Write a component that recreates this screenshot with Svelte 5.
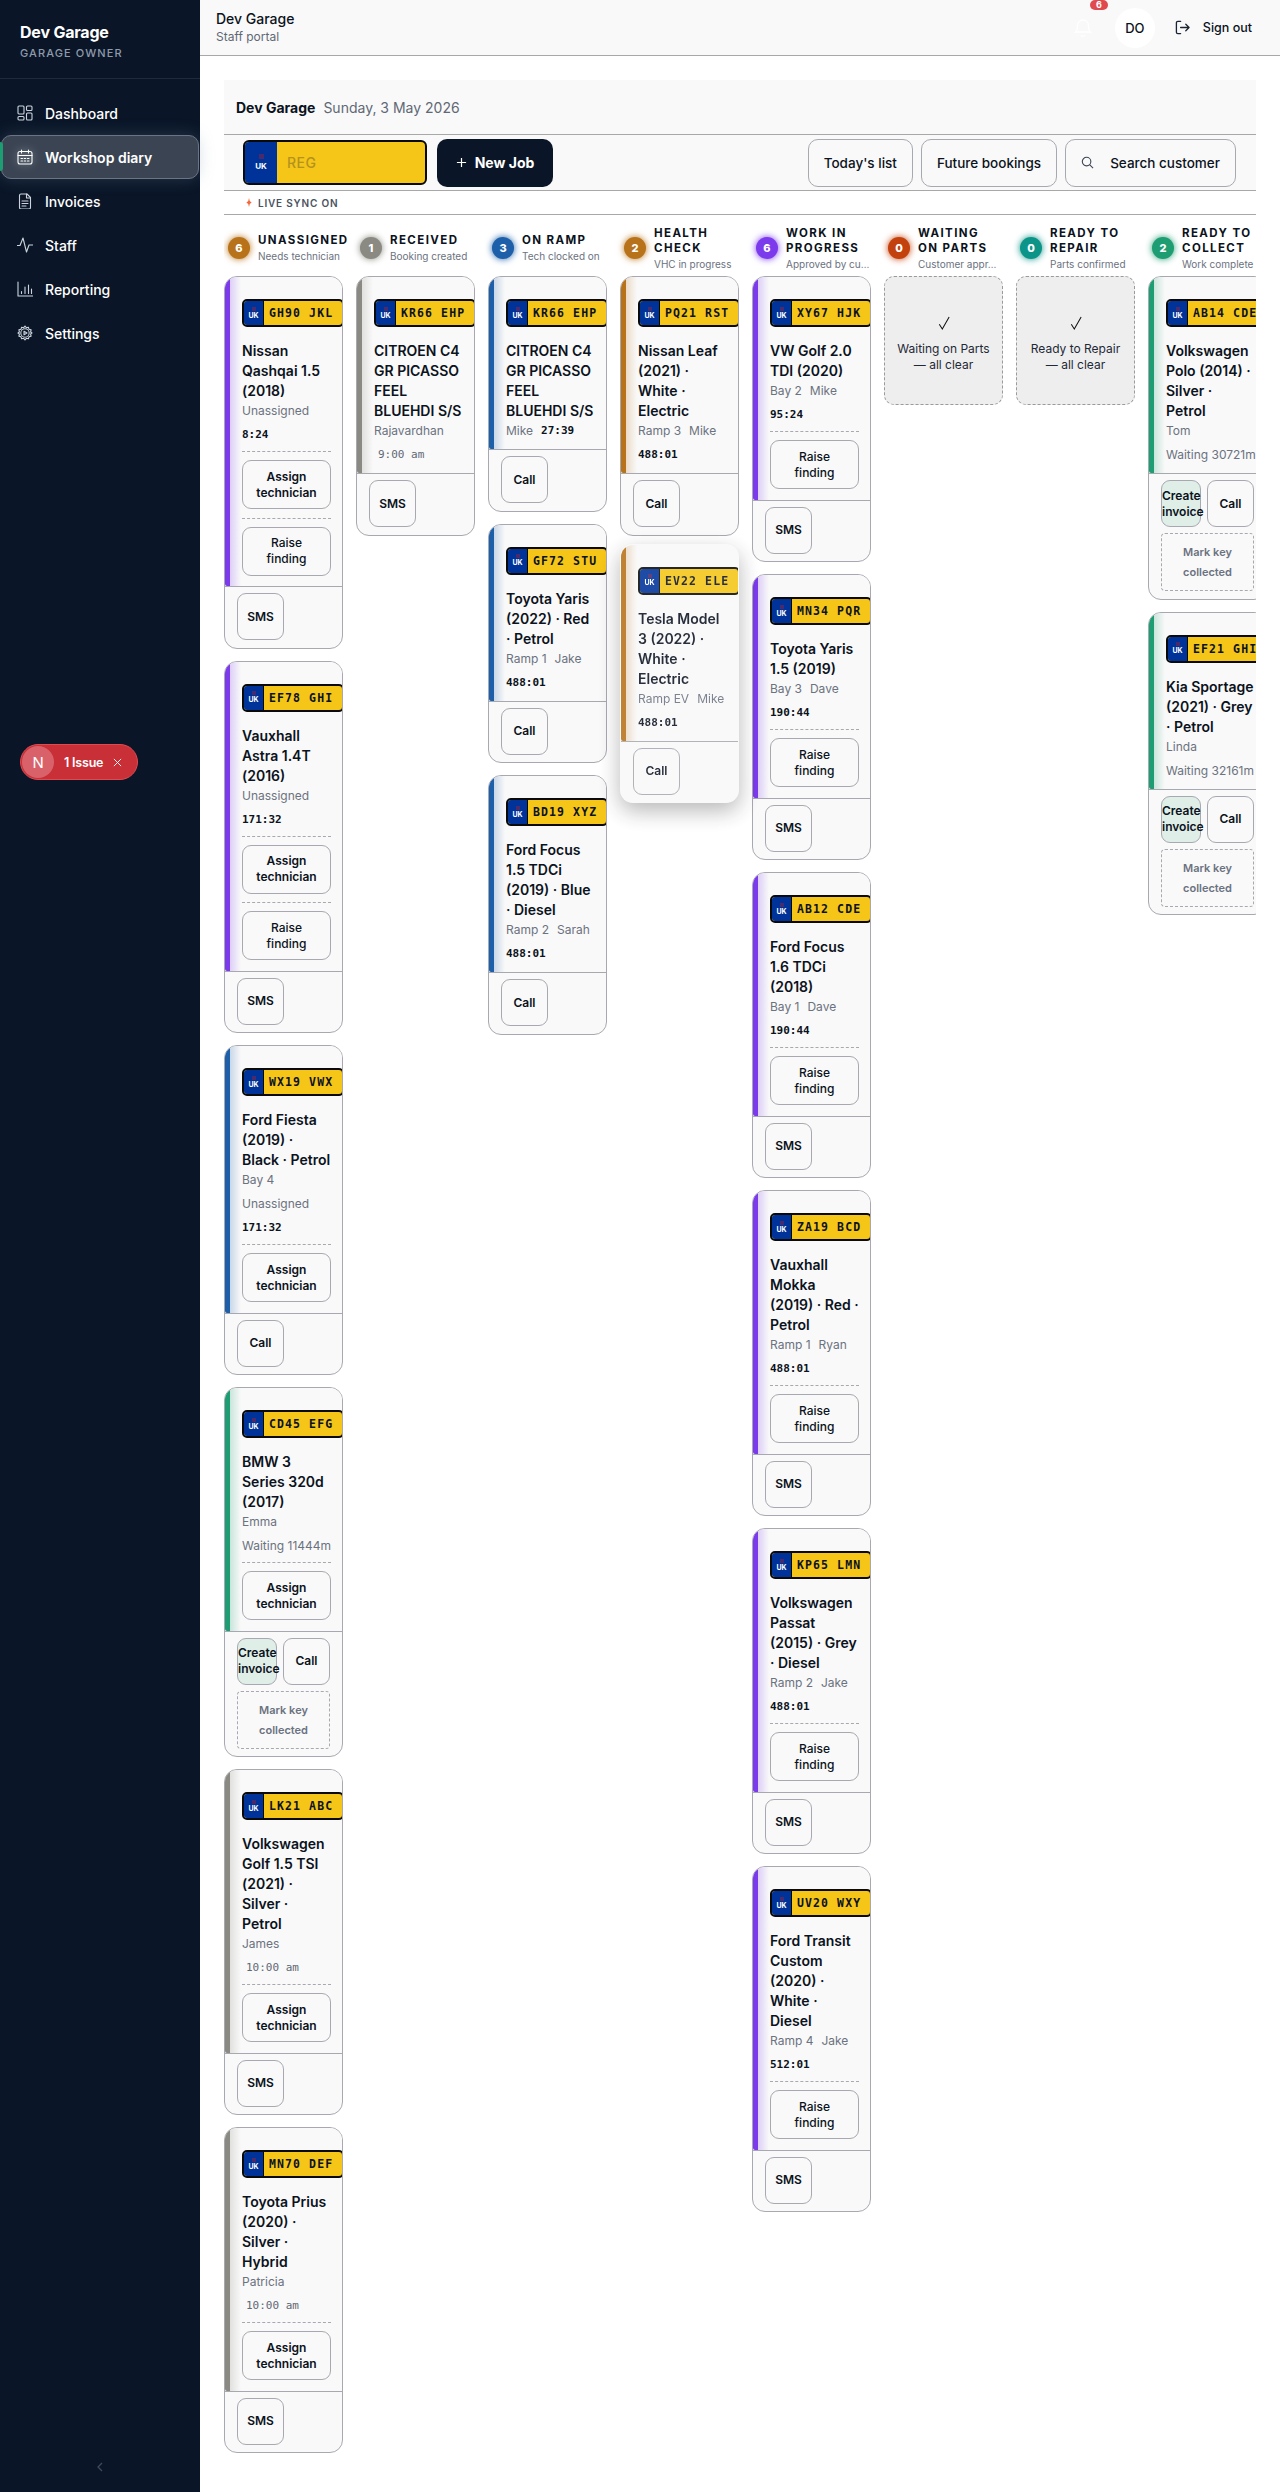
<script lang="ts">
  const PURPLE = '#7c3aed';
  const GREY = '#8a8a82';
  const BLUE = '#1d5fa8';
  const AMBER = '#b8731a';
  const GREEN = '#1f9d72';

  const nav = [
    { label: 'Dashboard', icon: 'dash' },
    { label: 'Workshop diary', icon: 'cal', active: true },
    { label: 'Invoices', icon: 'file' },
    { label: 'Staff', icon: 'pulse' },
    { label: 'Reporting', icon: 'bars' },
    { label: 'Settings', icon: 'gear' }
  ];

  const assign = 'Assign technician';
  const raise = 'Raise finding';

  const job = (reg, name, who, time, kind, actions, foot, color, lifted = false) => ({
    reg, name, who, time, kind, actions, foot, color, lifted
  });

  const collect = ['Create invoice', 'Call'];

  const columns = [
    {
      title: 'UNASSIGNED', sub: 'Needs technician', color: '#b8731a', count: 6,
      jobs: [
        job('GH90 JKL', 'Nissan Qashqai 1.5 (2018)', ['Unassigned'], '8:24', 'clock', [assign, raise], ['SMS'], PURPLE),
        job('EF78 GHI', 'Vauxhall Astra 1.4T (2016)', ['Unassigned'], '171:32', 'clock', [assign, raise], ['SMS'], PURPLE),
        job('WX19 VWX', 'Ford Fiesta (2019) · Black · Petrol', ['Bay 4', 'Unassigned'], '171:32', 'clock', [assign], ['Call'], BLUE),
        job('CD45 EFG', 'BMW 3 Series 320d (2017)', ['Emma'], 'Waiting 11444m', 'wait', [assign], collect, GREEN),
        job('LK21 ABC', 'Volkswagen Golf 1.5 TSI (2021) · Silver · Petrol', ['James'], '10:00 am', 'booked', [assign], ['SMS'], GREY),
        job('MN70 DEF', 'Toyota Prius (2020) · Silver · Hybrid', ['Patricia'], '10:00 am', 'booked', [assign], ['SMS'], GREY)
      ]
    },
    {
      title: 'RECEIVED', sub: 'Booking created', color: GREY, count: 1,
      jobs: [job('KR66 EHP', 'CITROEN C4 GR PICASSO FEEL BLUEHDI S/S', ['Rajavardhan'], '9:00 am', 'booked', [], ['SMS'], GREY)]
    },
    {
      title: 'ON RAMP', sub: 'Tech clocked on', color: BLUE, count: 3,
      jobs: [
        job('KR66 EHP', 'CITROEN C4 GR PICASSO FEEL BLUEHDI S/S', ['Mike'], '27:39', 'inline', [], ['Call'], BLUE),
        job('GF72 STU', 'Toyota Yaris (2022) · Red · Petrol', ['Ramp 1', 'Jake'], '488:01', 'clock', [], ['Call'], BLUE),
        job('BD19 XYZ', 'Ford Focus 1.5 TDCi (2019) · Blue · Diesel', ['Ramp 2', 'Sarah'], '488:01', 'clock', [], ['Call'], BLUE)
      ]
    },
    {
      title: 'HEALTH CHECK', sub: 'VHC in progress', color: AMBER, count: 2,
      jobs: [
        job('PQ21 RST', 'Nissan Leaf (2021) · White · Electric', ['Ramp 3', 'Mike'], '488:01', 'clock', [], ['Call'], AMBER),
        job('EV22 ELE', 'Tesla Model 3 (2022) · White · Electric', ['Ramp EV', 'Mike'], '488:01', 'clock', [], ['Call'], AMBER, true)
      ]
    },
    {
      title: 'WORK IN PROGRESS', sub: 'Approved by cu…', color: PURPLE, count: 6,
      jobs: [
        job('XY67 HJK', 'VW Golf 2.0 TDI (2020)', ['Bay 2', 'Mike'], '95:24', 'clock', [raise], ['SMS'], PURPLE),
        job('MN34 PQR', 'Toyota Yaris 1.5 (2019)', ['Bay 3', 'Dave'], '190:44', 'clock', [raise], ['SMS'], PURPLE),
        job('AB12 CDE', 'Ford Focus 1.6 TDCi (2018)', ['Bay 1', 'Dave'], '190:44', 'clock', [raise], ['SMS'], PURPLE),
        job('ZA19 BCD', 'Vauxhall Mokka (2019) · Red · Petrol', ['Ramp 1', 'Ryan'], '488:01', 'clock', [raise], ['SMS'], PURPLE),
        job('KP65 LMN', 'Volkswagen Passat (2015) · Grey · Diesel', ['Ramp 2', 'Jake'], '488:01', 'clock', [raise], ['SMS'], PURPLE),
        job('UV20 WXY', 'Ford Transit Custom (2020) · White · Diesel', ['Ramp 4', 'Jake'], '512:01', 'clock', [raise], ['SMS'], PURPLE)
      ]
    },
    { title: 'WAITING ON PARTS', sub: 'Customer appr…', color: '#c2410c', count: 0, empty: 'Waiting on Parts', jobs: [] },
    { title: 'READY TO REPAIR', sub: 'Parts confirmed', color: '#0d9488', count: 0, empty: 'Ready to Repair', jobs: [] },
    {
      title: 'READY TO COLLECT', sub: 'Work complete', color: GREEN, count: 2,
      jobs: [
        job('AB14 CDE', 'Volkswagen Polo (2014) · Silver · Petrol', ['Tom'], 'Waiting 30721m', 'wait', [], collect, GREEN),
        job('EF21 GHI', 'Kia Sportage (2021) · Grey · Petrol', ['Linda'], 'Waiting 32161m', 'wait', [], collect, GREEN)
      ]
    }
  ];
</script>

{#snippet plate(reg)}
  <div class="plate">
    <span class="plate-uk">
      <i class="flag"></i>
      UK
    </span>
    <span class="plate-reg">{reg}</span>
  </div>
{/snippet}

<div class="shell">
  <aside class="sidebar">
    <div class="brand">
      <strong>Dev Garage</strong>
      <span>GARAGE OWNER</span>
    </div>
    <nav>
      {#each nav as item}
        <div class="nav-item" class:active={item.active}>
          <svg viewBox="0 0 16 16" class="nav-icon">
            {#if item.icon === 'dash'}
              <rect x="1" y="1" width="6" height="8" rx="1" />
              <rect x="9.5" y="1" width="5.5" height="4.5" rx="1" />
              <rect x="9.5" y="8" width="5.5" height="7" rx="1" />
              <rect x="1" y="11.5" width="6" height="3.5" rx="1" />
            {:else if item.icon === 'cal'}
              <rect x="1" y="2.5" width="14" height="12.5" rx="2" />
              <path d="M1 6.5h14M4.5 1v3M11.5 1v3M4 9.5h1.5M7.2 9.5h1.5M10.5 9.5H12M4 12h1.5M7.2 12h1.5M10.5 12H12" />
            {:else if item.icon === 'file'}
              <path d="M2.5 2.500a1.500 1.500 0 0 1 1.500-1.500h6l3.500 3.500v10a1.500 1.500 0 0 1-1.500 1.500H4a1.500 1.500 0 0 1-1.500-1.500z" />
              <path d="M9.500 1v4h4M5 8h6M5 10.500h6M5 13h4" />
            {:else if item.icon === 'pulse'}
              <path d="M0 8.500h3L6 1l3.500 14 2.500-7h4" />
            {:else if item.icon === 'bars'}
              <path d="M1 1v14h15M4.500 10.500v2M8 6v6.500M11.500 4v8.500M14.500 8v4.500" />
            {:else}
              <path d="M8 1l1.300 1.700 2.100-.5.6 2.100 2.100.6-.5 2.100L15 8l-1.400 1 .5 2.100-2.100.6-.6 2.100-2.100-.5L8 15l-1.300-1.700-2.100.5-.6-2.100-2.100-.6.5-2.100L1 8l1.400-1-.5-2.100 2.100-.6.6-2.100 2.100.5z" />
              <circle cx="8" cy="8" r="4.200" />
              <path d="M7 6.200 10 8l-3 1.800z" />
            {/if}
          </svg>
          <span>{item.label}</span>
        </div>
      {/each}
    </nav>
    <div class="collapse">
      <svg viewBox="0 0 6 10"><path d="M5 1 1 5l4 4" /></svg>
    </div>
  </aside>

  <div class="issue">
    <span class="issue-n">N</span>
    <span class="issue-text">1 Issue</span>
    <svg viewBox="0 0 10 10"><path d="M1 1l8 8M9 1l-8 8" /></svg>
  </div>

  <main class="main">
    <header class="topbar">
      <div class="topbar-title">
        <strong>Dev Garage</strong>
        <span>Staff portal</span>
      </div>
      <div class="topbar-right">
        <div class="bell">
          <svg viewBox="0 0 18 20">
            <path d="M9 2a5.500 5.500 0 0 0-5.500 5.500c0 5-2 6.500-2 6.500h15s-2-1.500-2-6.500A5.500 5.500 0 0 0 9 2zM7 17a2.200 2.200 0 0 0 4 0" />
          </svg>
          <span class="bell-badge">6</span>
        </div>
        <div class="avatar">DO</div>
        <div class="signout">
          <svg viewBox="0 0 16 16">
            <path d="M6 1.500H3a1.500 1.500 0 0 0-1.500 1.500v10A1.500 1.500 0 0 0 3 14.500h3M6 8h9M11.500 4.500 15 8l-3.500 3.500" />
          </svg>
          <span>Sign out</span>
        </div>
      </div>
    </header>

    <section class="content">
      <div class="title-row">
        <strong>Dev Garage</strong>
        <span>Sunday, 3 May 2026</span>
      </div>

      <div class="toolbar">
        <div class="reg-input">
          <span class="reg-uk">
            <i class="flag"></i>
            UK
          </span>
          <span class="reg-placeholder">REG</span>
        </div>
        <button class="new-job">
          <svg viewBox="0 0 12 12"><path d="M6 1v10M1 6h10" /></svg>
          New Job
        </button>
        <div class="toolbar-right">
          <button class="tool">Today's list</button>
          <button class="tool">Future bookings</button>
          <button class="tool search">
            <svg viewBox="0 0 14 14"><circle cx="6" cy="6" r="4.600" /><path d="M9.500 9.500 13 13" /></svg>
            Search customer
          </button>
        </div>
      </div>

      <div class="live">
        <svg viewBox="0 0 8 12"><path d="M4 0 5 4l2.500 2L5 8l-1 4-1-4-2.500-2L3 4z" /></svg>
        LIVE SYNC ON
      </div>

      <div class="board">
        {#each columns as col}
          <div class="column">
            <div class="col-head">
              <span class="count" style="background:{col.color};box-shadow:0 0 7px {col.color}">{col.count}</span>
              <div class="col-text">
                <div class="col-title">{col.title}</div>
                <div class="col-sub">{col.sub}</div>
              </div>
            </div>

            {#if col.empty}
              <div class="empty">
                <svg viewBox="0 0 14 16"><path d="M1.500 9.500 5 15 13 1" /></svg>
                <span>{col.empty}</span>
                <span>— all clear</span>
              </div>
            {/if}

            {#each col.jobs as item}
              <article class="card" class:lifted={item.lifted}>
                <div class="card-body" style="--stripe:{item.color}">
                  {@render plate(item.reg)}
                  <div class="card-name">{item.name}</div>
                  <div class="card-who">
                    {#each item.who as who}<span>{who}</span>{/each}
                    {#if item.kind === 'inline'}<span class="clock">{item.time}</span>{/if}
                  </div>
                  {#if item.kind === 'clock'}
                    <div class="time clock">{item.time}</div>
                  {:else if item.kind === 'booked'}
                    <div class="time booked">{item.time}</div>
                  {:else if item.kind === 'wait'}
                    <div class="time wait">{item.time}</div>
                  {/if}
                  {#each item.actions as action}
                    <div class="action">
                      <button class="btn" class:strong={action === assign}>{action}</button>
                    </div>
                  {/each}
                </div>
                <div class="card-foot">
                  {#each item.foot as label}
                    <button class="btn strong foot-btn" class:invoice={label === 'Create invoice'}>{label}</button>
                  {/each}
                  {#if item.foot.length > 1}
                    <button class="key">Mark key collected</button>
                  {/if}
                </div>
              </article>
            {/each}
          </div>
        {/each}
      </div>
    </section>
  </main>
</div>

<style>
  :global(body) {
    margin: 0;
    background: #fff;
    font-family: Inter, 'Noto Sans', sans-serif;
    color: #0b1220;
  }

  button {
    font-family: inherit;
    color: inherit;
    cursor: pointer;
  }

  .shell {
    position: relative;
    display: flex;
    width: 1280px;
    height: 2492px;
    overflow: hidden;
  }

  .sidebar {
    display: flex;
    flex-direction: column;
    flex: 0 0 200px;
    background: #0a1628;
    color: #fff;
  }

  .brand {
    display: flex;
    flex-direction: column;
    gap: 5px;
    height: 79px;
    box-sizing: border-box;
    padding: 23px 20px 0;
    border-bottom: 1px solid #1f2b3d;
  }

  .brand strong {
    font-size: 16px;
    font-weight: 700;
    line-height: 18px;
    letter-spacing: -0.2px;
  }

  .brand span {
    font-size: 11px;
    font-weight: 500;
    letter-spacing: 1.1px;
    line-height: 14px;
    color: #8f9bab;
  }

  nav {
    display: flex;
    flex-direction: column;
    padding: 12px 1px 0;
    flex: 1;
  }

  .nav-item {
    position: relative;
    display: flex;
    align-items: center;
    gap: 12px;
    height: 44px;
    box-sizing: border-box;
    padding-left: 15px;
    font-size: 14px;
    font-weight: 500;
    border: 1px solid transparent;
    border-radius: 10px;
  }

  .nav-item.active {
    background: #3a4453;
    border-color: #6b7484;
    font-weight: 600;
    box-shadow: 0 0 16px rgba(120, 135, 160, 0.28);
  }

  .nav-item.active::before {
    content: '';
    position: absolute;
    left: -2px;
    top: 6px;
    bottom: 7px;
    width: 3px;
    border-radius: 0 3px 3px 0;
    background: #1f9d72;
  }

  .nav-icon {
    width: 16px;
    height: 16px;
    fill: none;
    stroke: #cdd3dc;
    stroke-width: 1.100;
    stroke-linecap: round;
    stroke-linejoin: round;
  }

  .active .nav-icon {
    stroke: #fff;
    filter: drop-shadow(0 0 4px rgba(255, 255, 255, 0.5));
  }

  .collapse {
    height: 36px;
    text-align: center;
  }

  .collapse svg {
    width: 6px;
    height: 10px;
    fill: none;
    stroke: #3f4b5c;
    stroke-width: 1.300;
  }

  .issue {
    position: absolute;
    left: 20px;
    top: 744px;
    display: flex;
    align-items: center;
    gap: 10px;
    width: 118px;
    height: 36px;
    box-sizing: border-box;
    padding: 0 12px 0 1px;
    background: #c92f36;
    border: 1px solid #df4a50;
    border-radius: 18px;
    color: #fff;
    font-size: 12.500px;
    font-weight: 600;
    letter-spacing: -0.2px;
    white-space: nowrap;
  }

  .issue-n {
    display: grid;
    place-items: center;
    flex: 0 0 32px;
    height: 32px;
    border-radius: 50%;
    background: #d9626a;
    font-size: 15px;
    font-weight: 400;
  }

  .issue svg {
    width: 9px;
    height: 9px;
    flex: 0 0 9px;
    fill: none;
    stroke: #fff;
    stroke-width: 1;
  }

  .main {
    flex: 1;
    min-width: 0;
  }

  .topbar {
    display: flex;
    justify-content: space-between;
    align-items: center;
    height: 56px;
    box-sizing: border-box;
    padding: 0 28px 0 16px;
    background: #f9f9f9;
    border-bottom: 1px solid #a8a8a8;
  }

  .topbar-title {
    display: flex;
    flex-direction: column;
  }

  .topbar-title strong {
    font-size: 14px;
    font-weight: 500;
    line-height: 18px;
  }

  .topbar-title span {
    font-size: 12px;
    line-height: 18px;
    color: #5f6875;
  }

  .topbar-right {
    display: flex;
    align-items: center;
  }

  .bell {
    position: relative;
    width: 18px;
    height: 20px;
    margin-right: 23px;
  }

  .bell svg {
    width: 18px;
    height: 20px;
    fill: none;
    stroke: #fff;
    stroke-width: 1.300;
  }

  .bell-badge {
    position: absolute;
    left: 16px;
    top: -18px;
    width: 18px;
    height: 10px;
    border-radius: 5px;
    background: #e04a4f;
    color: #fff;
    font-size: 9px;
    font-weight: 700;
    line-height: 10px;
    text-align: center;
  }

  .avatar {
    display: grid;
    place-items: center;
    width: 40px;
    height: 40px;
    border-radius: 50%;
    background: #fff;
    font-size: 13px;
    font-weight: 500;
  }

  .signout {
    display: flex;
    align-items: center;
    gap: 13px;
    margin-left: 20px;
    font-size: 12.500px;
    font-weight: 500;
  }

  .signout svg {
    width: 15px;
    height: 15px;
    fill: none;
    stroke: #1a2433;
    stroke-width: 1.400;
    stroke-linecap: round;
    stroke-linejoin: round;
  }

  .content {
    margin: 24px 24px 0;
  }

  .title-row {
    display: flex;
    align-items: center;
    gap: 8px;
    height: 55px;
    box-sizing: border-box;
    padding-left: 12px;
    background: #f9f9f9;
    border-bottom: 1px solid #a8a8a8;
    font-size: 14px;
  }

  .title-row strong {
    font-weight: 700;
  }

  .title-row span {
    color: #5f6875;
  }

  .toolbar {
    display: flex;
    align-items: center;
    height: 56px;
    box-sizing: border-box;
    padding: 0 20px 0 19px;
    background: #f9f9f9;
    border-bottom: 1px solid #a8a8a8;
  }

  .reg-input {
    display: flex;
    width: 184px;
    height: 45px;
    box-sizing: border-box;
    border: 2px solid #0a0a0a;
    border-radius: 6px;
    background: #f5c518;
    overflow: hidden;
  }

  .reg-uk {
    display: flex;
    flex-direction: column;
    align-items: center;
    justify-content: center;
    gap: 2px;
    flex: 0 0 32px;
    background: #003399;
    color: #fff;
    font-size: 8px;
    font-weight: 700;
  }

  .flag {
    display: block;
    width: 5px;
    height: 5px;
    background: #4a2a6a;
  }

  .reg-placeholder {
    align-self: center;
    margin-left: 10px;
    font-size: 14px;
    font-weight: 500;
    letter-spacing: 0.5px;
    color: #b39220;
  }

  .new-job {
    display: flex;
    align-items: center;
    justify-content: center;
    gap: 8px;
    width: 116px;
    height: 48px;
    margin-left: 10px;
    border: none;
    border-radius: 10px;
    background: #0a1628;
    color: #fff;
    font-size: 14px;
    font-weight: 700;
  }

  .new-job svg {
    width: 11px;
    height: 11px;
    fill: none;
    stroke: #fff;
    stroke-width: 1.300;
  }

  .toolbar-right {
    display: flex;
    gap: 8px;
    margin-left: auto;
  }

  .tool {
    height: 48px;
    padding: 0 15px;
    border: 1px solid #a8a8b0;
    border-radius: 10px;
    background: #f9f9f9;
    font-size: 13.500px;
    font-weight: 500;
  }

  .tool.search {
    display: flex;
    align-items: center;
    gap: 16px;
  }

  .search svg {
    width: 13px;
    height: 13px;
    fill: none;
    stroke: #3a4453;
    stroke-width: 1.200;
  }

  .live {
    display: flex;
    align-items: center;
    gap: 6px;
    height: 24px;
    box-sizing: border-box;
    padding-left: 22px;
    border-bottom: 1px solid #a8a8a8;
    font-size: 10px;
    font-weight: 600;
    letter-spacing: 0.8px;
    color: #4a5361;
  }

  .live svg {
    width: 6px;
    height: 9px;
    fill: #f2683c;
  }

  .board {
    display: flex;
    gap: 13px;
    overflow: hidden;
  }

  .column {
    display: flex;
    flex-direction: column;
    gap: 12px;
    flex: 0 0 119px;
    width: 119px;
  }

  .col-head {
    display: flex;
    align-items: center;
    gap: 8px;
    height: 49px;
    box-sizing: border-box;
    padding: 17px 0 0 4px;
  }

  .count {
    display: grid;
    place-items: center;
    flex: 0 0 22px;
    height: 22px;
    border-radius: 50%;
    color: #fff;
    font-size: 11px;
    font-weight: 800;
  }

  .col-text {
    min-width: 0;
    flex: 1;
  }

  .col-title {
    width: 78px;
    font-size: 11.500px;
    font-weight: 700;
    line-height: 15px;
    letter-spacing: 1.400px;
  }

  .col-sub {
    margin-top: 1px;
    font-size: 10px;
    line-height: 14px;
    color: #6b7280;
    white-space: nowrap;
  }

  .empty {
    display: flex;
    flex-direction: column;
    align-items: center;
    box-sizing: border-box;
    height: 129px;
    padding: 39px 6px 0;
    background: #eeeeee;
    border: 1px dashed #9a9a9a;
    border-radius: 10px;
    font-size: 12px;
    line-height: 16px;
    text-align: center;
    color: #1f2937;
  }

  .empty svg {
    width: 12px;
    height: 14px;
    margin-bottom: 11px;
    fill: none;
    stroke: #111;
    stroke-width: 1.200;
  }

  .card {
    border: 1px solid #a8a8b0;
    border-radius: 13px;
    background: #f9f9f9;
    overflow: hidden;
  }

  .card.lifted {
    margin-top: -4px;
    border-color: transparent;
    opacity: 0.88;
    box-shadow: 0 8px 22px rgba(0, 0, 0, 0.32);
    position: relative;
  }

  .card-body {
    padding: 22px 0 8px 17px;
    background: linear-gradient(90deg, var(--stripe) 5px, color-mix(in srgb, var(--stripe) 22%, #f9f9f9) 5px, #f9f9f9 16px);
    border-radius: 0 0 0 2px;
  }

  .plate {
    display: flex;
    width: 102px;
    height: 28px;
    box-sizing: border-box;
    border: 2px solid #0a0a0a;
    border-radius: 5px;
    background: #f5c518;
    overflow: hidden;
  }

  .plate-uk {
    display: flex;
    flex-direction: column;
    align-items: center;
    justify-content: center;
    flex: 0 0 19px;
    background: #003399;
    color: #fff;
    font-size: 7px;
    font-weight: 700;
    line-height: 9px;
    border-right: 1px solid #0a0a0a;
  }

  .plate .flag {
    width: 4px;
    height: 4px;
  }

  .plate-reg {
    flex: 1;
    align-self: center;
    padding-left: 5px;
    font-family: 'DejaVu Sans Mono', 'Liberation Mono', monospace;
    font-size: 11.500px;
    font-weight: 700;
    letter-spacing: 1.100px;
    white-space: nowrap;
  }

  .card-name {
    width: 89px;
    margin-top: 14px;
    font-size: 14px;
    font-weight: 600;
    line-height: 20px;
  }

  .card-who {
    display: flex;
    flex-wrap: wrap;
    gap: 4px 8px;
    width: 89px;
    font-size: 12px;
    line-height: 20px;
    color: #6b7280;
  }

  .time {
    margin-top: 4px;
    line-height: 20px;
    white-space: nowrap;
  }

  .clock {
    font-family: 'DejaVu Sans Mono', 'Liberation Mono', monospace;
    font-size: 11px;
    font-weight: 700;
    color: #0b1220;
  }

  .time.booked {
    padding-left: 4px;
    font-family: 'DejaVu Sans Mono', 'Liberation Mono', monospace;
    font-size: 11px;
    font-weight: 500;
    color: #5f6875;
  }

  .time.wait {
    font-size: 12px;
    color: #6b7280;
  }

  .action {
    width: 89px;
    margin-top: 6px;
    padding-top: 8px;
    padding-bottom: 2.500px;
    border-top: 1px dashed #a8a8b0;
  }

  .btn {
    display: block;
    width: 100%;
    height: 49px;
    padding: 0 12px;
    border: 1px solid #a8a8b0;
    border-radius: 9px;
    background: #f9f9f9;
    font-size: 12px;
    font-weight: 500;
    line-height: 16px;
  }

  .btn.strong {
    font-weight: 600;
  }

  .card-foot {
    display: flex;
    flex-wrap: wrap;
    gap: 6px;
    padding: 6px 12px 7.500px 12px;
    border-top: 1px solid #a8a8b0;
  }

  .foot-btn {
    flex: 0 0 auto;
    width: 47px;
    height: 47px;
    padding: 0;
  }

  .foot-btn.invoice {
    width: 40px;
    background: #e0eee8;
  }

  .key {
    width: 94px;
    height: 58px;
    padding: 0 6px;
    border: 1px dashed #a8a8b0;
    border-radius: 4px;
    background: transparent;
    font-size: 11px;
    font-weight: 600;
    line-height: 20px;
    color: #6b7280;
  }
</style>
